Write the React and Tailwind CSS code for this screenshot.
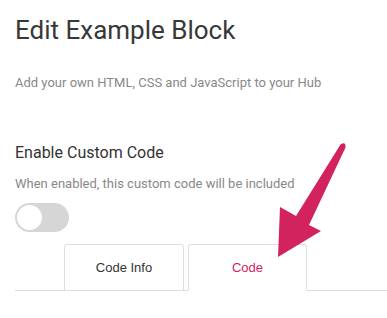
import React from "react";

export default function App() {
  return (
    <div className="relative w-[387px] h-[318px] bg-white overflow-hidden" style={{ fontFamily: "Roboto, 'Liberation Sans', sans-serif" }}>
      <div className="pl-[15px] pt-[15px] flex flex-col">
        <h1 className="text-[26px] leading-[30px] text-[#383838] font-normal">Edit Example Block</h1>
        <p className="mt-[28px] text-[13px] leading-[20px] text-[#888888]">Add your own HTML, CSS and JavaScript to your Hub</p>
        <h2 className="mt-[48px] text-[16px] leading-[24px] text-[#333333]">Enable Custom Code</h2>
        <p className="mt-[9px] text-[13px] leading-[20px] text-[#888888]">When enabled, this custom code will be included</p>
        <div className="mt-[9px] w-[54px] h-[29px] rounded-full bg-[#d6d6d6] flex items-center pl-[2px]">
          <div className="w-[25px] h-[25px] rounded-full bg-white"></div>
        </div>
        <div className="mt-[12px] flex border-b border-[#dddddd] pl-[49px] gap-[4px]" style={{ fontFamily: "'Liberation Sans', Arial, sans-serif" }}>
          <div className="-mb-px w-[120px] h-[47px] border border-[#dddddd] rounded-t-[3px] bg-white flex items-center justify-center pt-[1px] text-[13px] text-[#333333]">Code Info</div>
          <div className="-mb-px w-[119px] h-[47px] border border-[#dddddd] border-b-white rounded-t-[3px] bg-white flex items-center justify-center pt-[1px] text-[13px] text-[#d81b60]">Code</div>
        </div>
      </div>
      <svg className="absolute left-0 top-0" width="387" height="318" viewBox="0 0 387 318">
        <path d="M 340.5 144.5 L 296 216 L 280 207 L 278 257 L 321 231 L 309 225 L 345.5 147.5 Q 346 141 340.5 144.5 Z" fill="#d2235f" />
      </svg>
    </div>
  );
}
